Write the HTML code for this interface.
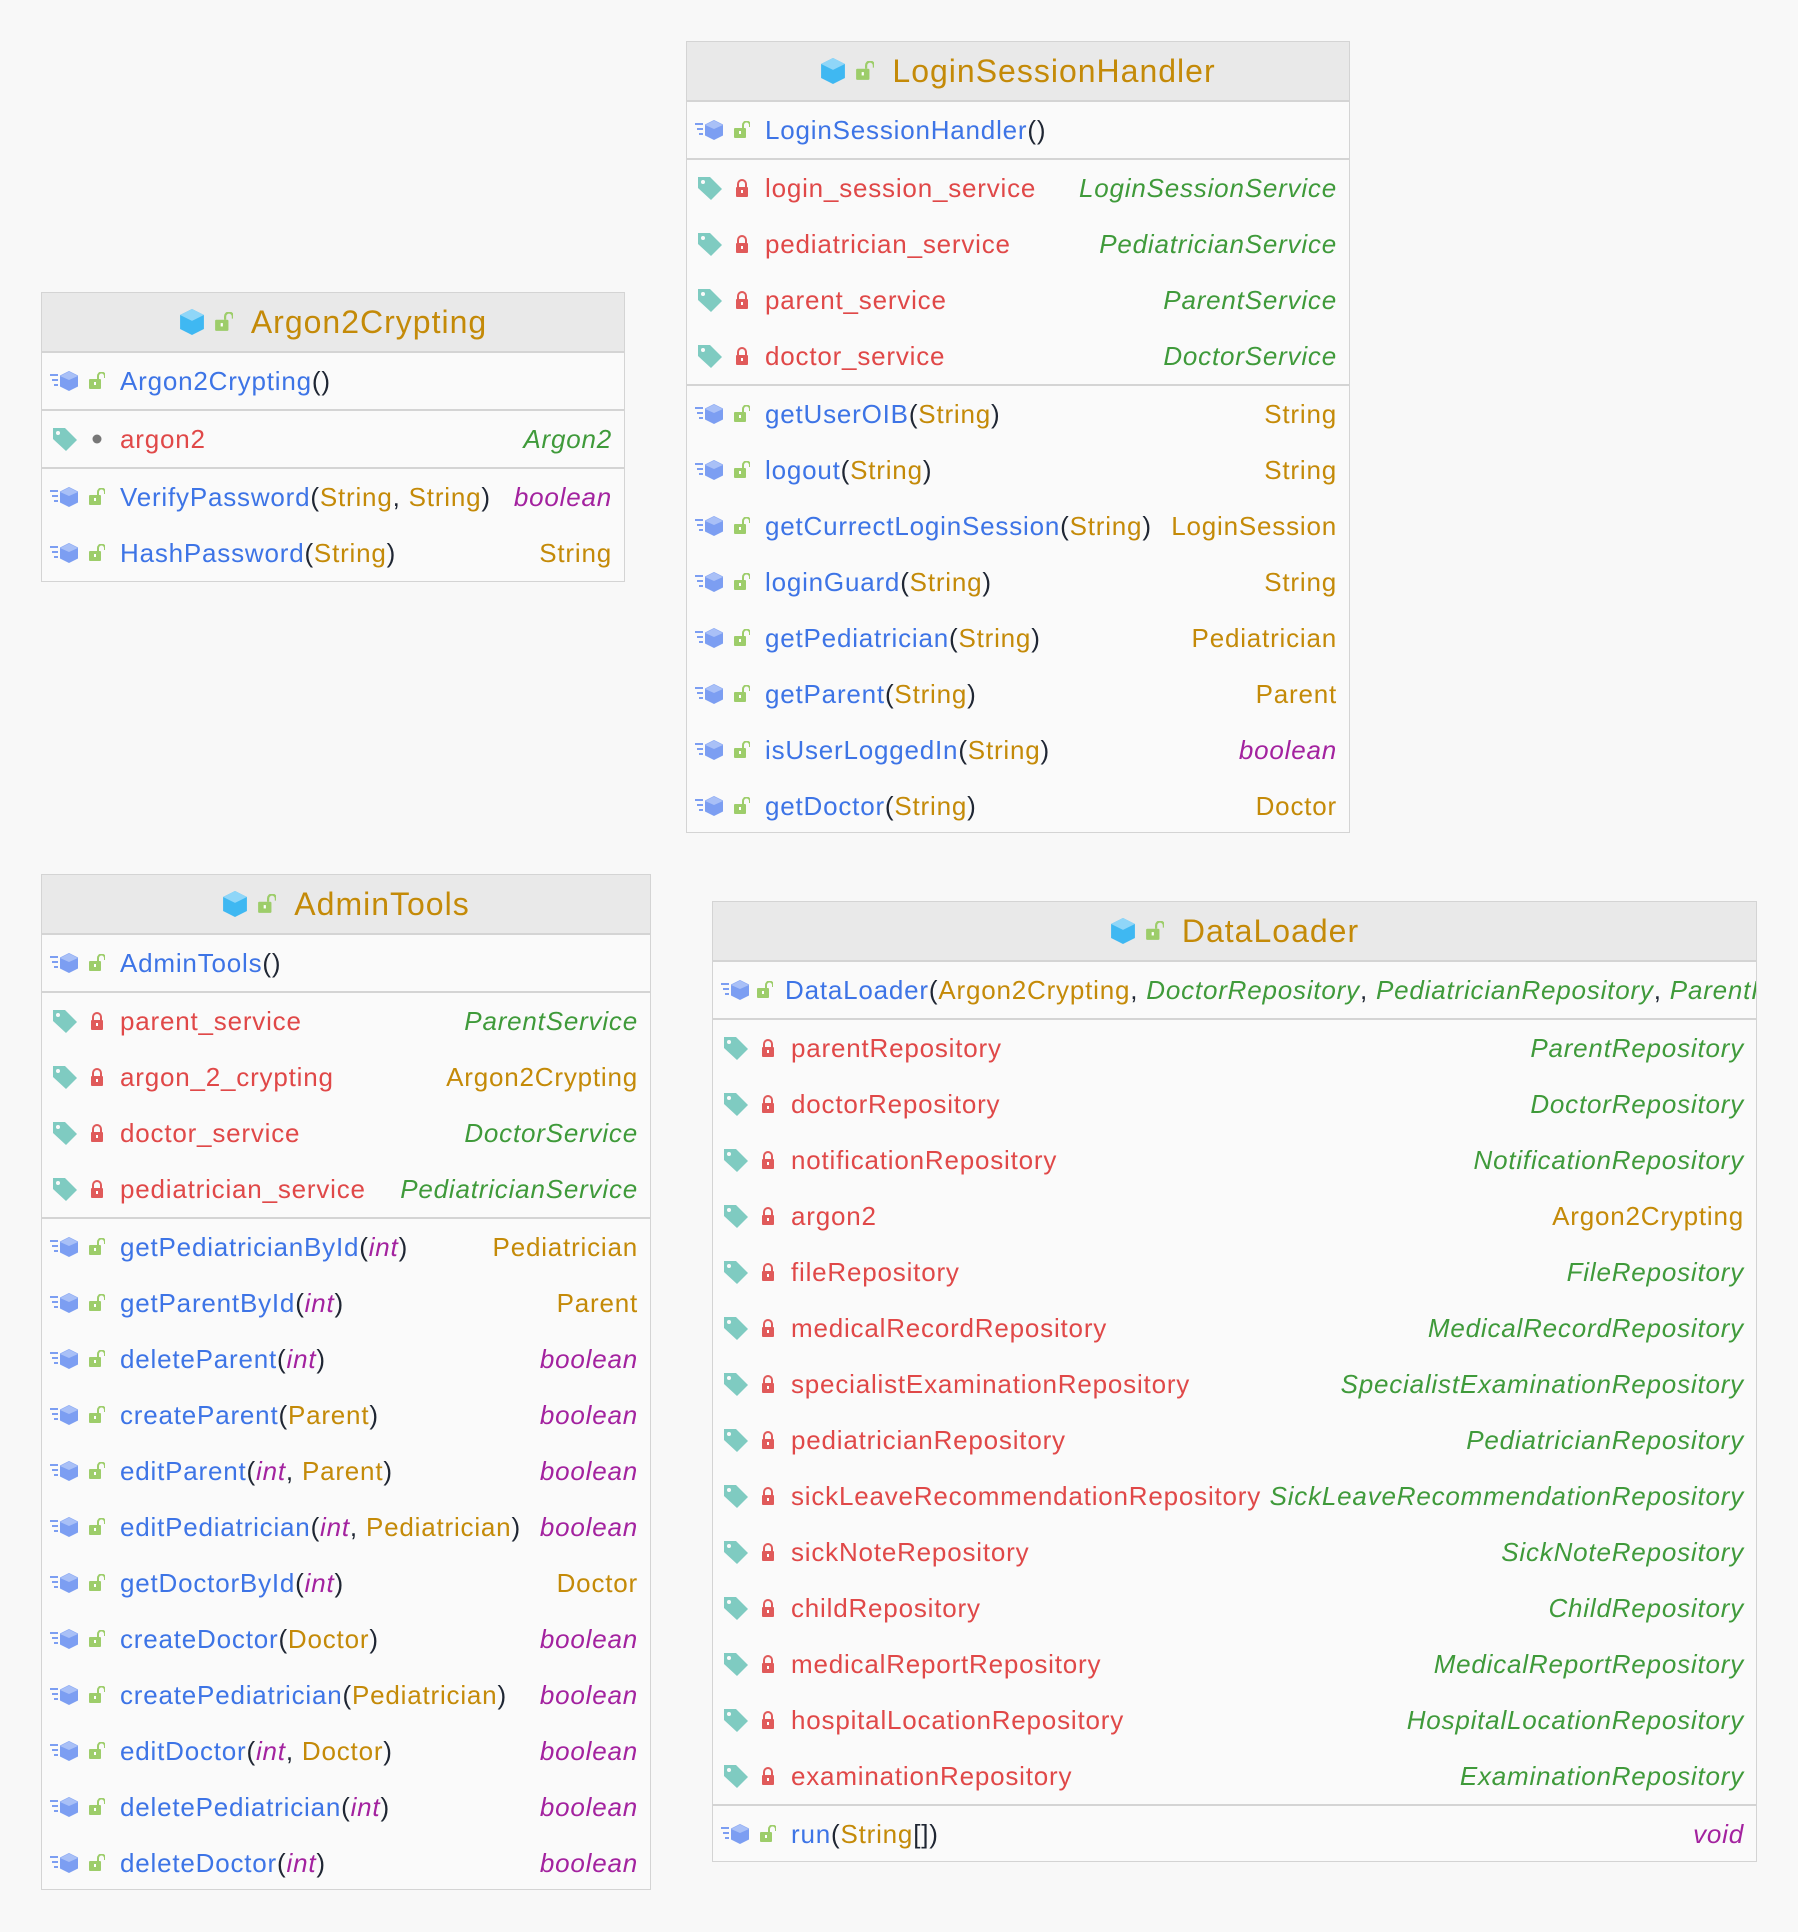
<!DOCTYPE html>
<html><head><meta charset="utf-8">
<style>
body{margin:0;width:1798px;height:1932px;background:#f8f8f8;font-family:"Liberation Sans",sans-serif;position:relative;overflow:hidden}
.box{position:absolute;background:#fafafa;border:1px solid #d4d4d4;box-sizing:border-box;overflow:hidden}
.hd{height:58px;background:#e9e9e9;border-bottom:2px solid #d4d4d4;display:flex;align-items:center;justify-content:center;font-size:32px;color:#c48a08;letter-spacing:1px}
.hd svg{margin-right:10px}
.hd .t{margin-left:8px}
.sec{border-bottom:2px solid #d4d4d4}
.sec:last-child{border-bottom:none}
.r{height:56px;display:flex;align-items:center;font-size:26px;white-space:pre;padding-right:12px;letter-spacing:0.8px}
.i1{width:30px;margin-left:8px;display:flex;justify-content:center}
.i2{width:22px;margin-left:6px;margin-right:12px;display:flex;justify-content:center}
.m{color:#3d74e6}.f{color:#e04848}.p{color:#1f2633}.o{color:#c48a08}.g{color:#3f9a3a;font-style:italic}.v{color:#a3229f;font-style:italic}
.ty{margin-left:auto}
</style></head><body>
<svg width="0" height="0" style="position:absolute">
<defs>
<symbol id="mt" viewBox="0 0 30 22"><g fill="#7c9ef2"><rect x="0" y="4" width="8" height="2"/><rect x="2" y="9" width="6" height="2"/><rect x="4" y="14" width="4" height="2"/><path d="M19 1 L28 5.5 V16.5 L19 21 L10 16.5 V5.5Z"/></g><path d="M10 6 L19 10 L28 6 L19 1.5Z" fill="#a9c0f7"/></symbol>
<symbol id="ol" viewBox="0 0 16 18"><path d="M9 7 V4 a3.5 3.5 0 0 1 7 0 V6" fill="none" stroke="#9dcd6a" stroke-width="2"/><rect x="0" y="7" width="12" height="10" rx="1" fill="#9dcd6a"/><rect x="5" y="10" width="2" height="3" fill="#fff"/></symbol>
<symbol id="cl" viewBox="0 0 14 18"><path d="M3 8 V5 a4 4 0 0 1 8 0 V8" fill="none" stroke="#e05a5a" stroke-width="2"/><rect x="1" y="8" width="12" height="10" rx="1" fill="#e05a5a"/><rect x="6" y="11" width="2" height="3" fill="#fff"/></symbol>
<symbol id="tg" viewBox="0 0 28 26"><path d="M2 2 H14 L26 14 L15 25 L2 13Z" fill="#7fcbc1"/><circle cx="7" cy="7" r="2" fill="#fafafa"/></symbol>
<symbol id="hx" viewBox="0 0 24 26"><path d="M12 1 L23 6.5 V19.5 L12 25 L1 19.5 V6.5Z" fill="#3fb8f2"/><path d="M1 6.5 L12 12 L23 6.5 L12 1Z" fill="#8fd6f8"/></symbol>
</defs></svg>

<!-- LoginSessionHandler -->
<div class="box" style="left:686px;top:41px;width:664px;height:792px">
<div class="hd"><svg width="26" height="30"><use href="#hx"/></svg><svg width="18" height="20"><use href="#ol"/></svg><span class="t">LoginSessionHandler</span></div>
<div class="sec"><div class="r"><span class="i1"><svg width="30" height="22"><use href="#mt"/></svg></span><span class="i2"><svg width="16" height="18"><use href="#ol"/></svg></span><span class="m">LoginSessionHandler</span><span class="p">()</span></div></div>
<div class="sec">
<div class="r"><span class="i1"><svg width="28" height="26"><use href="#tg"/></svg></span><span class="i2"><svg width="14" height="18"><use href="#cl"/></svg></span><span class="f">login_session_service</span><span class="ty g">LoginSessionService</span></div>
<div class="r"><span class="i1"><svg width="28" height="26"><use href="#tg"/></svg></span><span class="i2"><svg width="14" height="18"><use href="#cl"/></svg></span><span class="f">pediatrician_service</span><span class="ty g">PediatricianService</span></div>
<div class="r"><span class="i1"><svg width="28" height="26"><use href="#tg"/></svg></span><span class="i2"><svg width="14" height="18"><use href="#cl"/></svg></span><span class="f">parent_service</span><span class="ty g">ParentService</span></div>
<div class="r"><span class="i1"><svg width="28" height="26"><use href="#tg"/></svg></span><span class="i2"><svg width="14" height="18"><use href="#cl"/></svg></span><span class="f">doctor_service</span><span class="ty g">DoctorService</span></div>
</div>
<div class="sec">
<div class="r"><span class="i1"><svg width="30" height="22"><use href="#mt"/></svg></span><span class="i2"><svg width="16" height="18"><use href="#ol"/></svg></span><span class="m">getUserOIB</span><span class="p">(</span><span class="o">String</span><span class="p">)</span><span class="ty o">String</span></div>
<div class="r"><span class="i1"><svg width="30" height="22"><use href="#mt"/></svg></span><span class="i2"><svg width="16" height="18"><use href="#ol"/></svg></span><span class="m">logout</span><span class="p">(</span><span class="o">String</span><span class="p">)</span><span class="ty o">String</span></div>
<div class="r"><span class="i1"><svg width="30" height="22"><use href="#mt"/></svg></span><span class="i2"><svg width="16" height="18"><use href="#ol"/></svg></span><span class="m">getCurrectLoginSession</span><span class="p">(</span><span class="o">String</span><span class="p">)</span><span class="ty o">LoginSession</span></div>
<div class="r"><span class="i1"><svg width="30" height="22"><use href="#mt"/></svg></span><span class="i2"><svg width="16" height="18"><use href="#ol"/></svg></span><span class="m">loginGuard</span><span class="p">(</span><span class="o">String</span><span class="p">)</span><span class="ty o">String</span></div>
<div class="r"><span class="i1"><svg width="30" height="22"><use href="#mt"/></svg></span><span class="i2"><svg width="16" height="18"><use href="#ol"/></svg></span><span class="m">getPediatrician</span><span class="p">(</span><span class="o">String</span><span class="p">)</span><span class="ty o">Pediatrician</span></div>
<div class="r"><span class="i1"><svg width="30" height="22"><use href="#mt"/></svg></span><span class="i2"><svg width="16" height="18"><use href="#ol"/></svg></span><span class="m">getParent</span><span class="p">(</span><span class="o">String</span><span class="p">)</span><span class="ty o">Parent</span></div>
<div class="r"><span class="i1"><svg width="30" height="22"><use href="#mt"/></svg></span><span class="i2"><svg width="16" height="18"><use href="#ol"/></svg></span><span class="m">isUserLoggedIn</span><span class="p">(</span><span class="o">String</span><span class="p">)</span><span class="ty v">boolean</span></div>
<div class="r"><span class="i1"><svg width="30" height="22"><use href="#mt"/></svg></span><span class="i2"><svg width="16" height="18"><use href="#ol"/></svg></span><span class="m">getDoctor</span><span class="p">(</span><span class="o">String</span><span class="p">)</span><span class="ty o">Doctor</span></div>
</div></div>

<!-- Argon2Crypting -->
<div class="box" style="left:41px;top:292px;width:584px;height:290px">
<div class="hd"><svg width="26" height="30"><use href="#hx"/></svg><svg width="18" height="20"><use href="#ol"/></svg><span class="t">Argon2Crypting</span></div>
<div class="sec"><div class="r"><span class="i1"><svg width="30" height="22"><use href="#mt"/></svg></span><span class="i2"><svg width="16" height="18"><use href="#ol"/></svg></span><span class="m">Argon2Crypting</span><span class="p">()</span></div></div>
<div class="sec"><div class="r"><span class="i1"><svg width="28" height="26"><use href="#tg"/></svg></span><span class="i2"><svg width="10" height="10"><circle cx="5" cy="5" r="4.5" fill="#777"/></svg></span><span class="f">argon2</span><span class="ty g">Argon2</span></div></div>
<div class="sec">
<div class="r"><span class="i1"><svg width="30" height="22"><use href="#mt"/></svg></span><span class="i2"><svg width="16" height="18"><use href="#ol"/></svg></span><span class="m">VerifyPassword</span><span class="p">(</span><span class="o">String</span><span class="p">,&nbsp;</span><span class="o">String</span><span class="p">)</span><span class="ty v">boolean</span></div>
<div class="r"><span class="i1"><svg width="30" height="22"><use href="#mt"/></svg></span><span class="i2"><svg width="16" height="18"><use href="#ol"/></svg></span><span class="m">HashPassword</span><span class="p">(</span><span class="o">String</span><span class="p">)</span><span class="ty o">String</span></div>
</div></div>

<!-- AdminTools -->
<div class="box" style="left:41px;top:874px;width:610px;height:1016px">
<div class="hd"><svg width="26" height="30"><use href="#hx"/></svg><svg width="18" height="20"><use href="#ol"/></svg><span class="t">AdminTools</span></div>
<div class="sec"><div class="r"><span class="i1"><svg width="30" height="22"><use href="#mt"/></svg></span><span class="i2"><svg width="16" height="18"><use href="#ol"/></svg></span><span class="m">AdminTools</span><span class="p">()</span></div></div>
<div class="sec">
<div class="r"><span class="i1"><svg width="28" height="26"><use href="#tg"/></svg></span><span class="i2"><svg width="14" height="18"><use href="#cl"/></svg></span><span class="f">parent_service</span><span class="ty g">ParentService</span></div>
<div class="r"><span class="i1"><svg width="28" height="26"><use href="#tg"/></svg></span><span class="i2"><svg width="14" height="18"><use href="#cl"/></svg></span><span class="f">argon_2_crypting</span><span class="ty o">Argon2Crypting</span></div>
<div class="r"><span class="i1"><svg width="28" height="26"><use href="#tg"/></svg></span><span class="i2"><svg width="14" height="18"><use href="#cl"/></svg></span><span class="f">doctor_service</span><span class="ty g">DoctorService</span></div>
<div class="r"><span class="i1"><svg width="28" height="26"><use href="#tg"/></svg></span><span class="i2"><svg width="14" height="18"><use href="#cl"/></svg></span><span class="f">pediatrician_service</span><span class="ty g">PediatricianService</span></div>
</div>
<div class="sec">
<div class="r"><span class="i1"><svg width="30" height="22"><use href="#mt"/></svg></span><span class="i2"><svg width="16" height="18"><use href="#ol"/></svg></span><span class="m">getPediatricianById</span><span class="p">(</span><span class="v">int</span><span class="p">)</span><span class="ty o">Pediatrician</span></div>
<div class="r"><span class="i1"><svg width="30" height="22"><use href="#mt"/></svg></span><span class="i2"><svg width="16" height="18"><use href="#ol"/></svg></span><span class="m">getParentById</span><span class="p">(</span><span class="v">int</span><span class="p">)</span><span class="ty o">Parent</span></div>
<div class="r"><span class="i1"><svg width="30" height="22"><use href="#mt"/></svg></span><span class="i2"><svg width="16" height="18"><use href="#ol"/></svg></span><span class="m">deleteParent</span><span class="p">(</span><span class="v">int</span><span class="p">)</span><span class="ty v">boolean</span></div>
<div class="r"><span class="i1"><svg width="30" height="22"><use href="#mt"/></svg></span><span class="i2"><svg width="16" height="18"><use href="#ol"/></svg></span><span class="m">createParent</span><span class="p">(</span><span class="o">Parent</span><span class="p">)</span><span class="ty v">boolean</span></div>
<div class="r"><span class="i1"><svg width="30" height="22"><use href="#mt"/></svg></span><span class="i2"><svg width="16" height="18"><use href="#ol"/></svg></span><span class="m">editParent</span><span class="p">(</span><span class="v">int</span><span class="p">,&nbsp;</span><span class="o">Parent</span><span class="p">)</span><span class="ty v">boolean</span></div>
<div class="r"><span class="i1"><svg width="30" height="22"><use href="#mt"/></svg></span><span class="i2"><svg width="16" height="18"><use href="#ol"/></svg></span><span class="m">editPediatrician</span><span class="p">(</span><span class="v">int</span><span class="p">,&nbsp;</span><span class="o">Pediatrician</span><span class="p">)</span><span class="ty v">boolean</span></div>
<div class="r"><span class="i1"><svg width="30" height="22"><use href="#mt"/></svg></span><span class="i2"><svg width="16" height="18"><use href="#ol"/></svg></span><span class="m">getDoctorById</span><span class="p">(</span><span class="v">int</span><span class="p">)</span><span class="ty o">Doctor</span></div>
<div class="r"><span class="i1"><svg width="30" height="22"><use href="#mt"/></svg></span><span class="i2"><svg width="16" height="18"><use href="#ol"/></svg></span><span class="m">createDoctor</span><span class="p">(</span><span class="o">Doctor</span><span class="p">)</span><span class="ty v">boolean</span></div>
<div class="r"><span class="i1"><svg width="30" height="22"><use href="#mt"/></svg></span><span class="i2"><svg width="16" height="18"><use href="#ol"/></svg></span><span class="m">createPediatrician</span><span class="p">(</span><span class="o">Pediatrician</span><span class="p">)</span><span class="ty v">boolean</span></div>
<div class="r"><span class="i1"><svg width="30" height="22"><use href="#mt"/></svg></span><span class="i2"><svg width="16" height="18"><use href="#ol"/></svg></span><span class="m">editDoctor</span><span class="p">(</span><span class="v">int</span><span class="p">,&nbsp;</span><span class="o">Doctor</span><span class="p">)</span><span class="ty v">boolean</span></div>
<div class="r"><span class="i1"><svg width="30" height="22"><use href="#mt"/></svg></span><span class="i2"><svg width="16" height="18"><use href="#ol"/></svg></span><span class="m">deletePediatrician</span><span class="p">(</span><span class="v">int</span><span class="p">)</span><span class="ty v">boolean</span></div>
<div class="r"><span class="i1"><svg width="30" height="22"><use href="#mt"/></svg></span><span class="i2"><svg width="16" height="18"><use href="#ol"/></svg></span><span class="m">deleteDoctor</span><span class="p">(</span><span class="v">int</span><span class="p">)</span><span class="ty v">boolean</span></div>
</div></div>

<!-- DataLoader -->
<div class="box" style="left:712px;top:901px;width:1045px;height:961px">
<div class="hd"><svg width="26" height="30"><use href="#hx"/></svg><svg width="18" height="20"><use href="#ol"/></svg><span class="t">DataLoader</span></div>
<div class="sec"><div class="r"><span class="i1"><svg width="30" height="22"><use href="#mt"/></svg></span><span class="i2"><svg width="16" height="18"><use href="#ol"/></svg></span><span class="m">DataLoader</span><span class="p">(</span><span class="o">Argon2Crypting</span><span class="p">,&nbsp;</span><span class="g">DoctorRepository</span><span class="p">,&nbsp;</span><span class="g">PediatricianRepository</span><span class="p">,&nbsp;</span><span class="g">ParentRepository</span></div></div>
<div class="sec">
<div class="r"><span class="i1"><svg width="28" height="26"><use href="#tg"/></svg></span><span class="i2"><svg width="14" height="18"><use href="#cl"/></svg></span><span class="f">parentRepository</span><span class="ty g">ParentRepository</span></div>
<div class="r"><span class="i1"><svg width="28" height="26"><use href="#tg"/></svg></span><span class="i2"><svg width="14" height="18"><use href="#cl"/></svg></span><span class="f">doctorRepository</span><span class="ty g">DoctorRepository</span></div>
<div class="r"><span class="i1"><svg width="28" height="26"><use href="#tg"/></svg></span><span class="i2"><svg width="14" height="18"><use href="#cl"/></svg></span><span class="f">notificationRepository</span><span class="ty g">NotificationRepository</span></div>
<div class="r"><span class="i1"><svg width="28" height="26"><use href="#tg"/></svg></span><span class="i2"><svg width="14" height="18"><use href="#cl"/></svg></span><span class="f">argon2</span><span class="ty o">Argon2Crypting</span></div>
<div class="r"><span class="i1"><svg width="28" height="26"><use href="#tg"/></svg></span><span class="i2"><svg width="14" height="18"><use href="#cl"/></svg></span><span class="f">fileRepository</span><span class="ty g">FileRepository</span></div>
<div class="r"><span class="i1"><svg width="28" height="26"><use href="#tg"/></svg></span><span class="i2"><svg width="14" height="18"><use href="#cl"/></svg></span><span class="f">medicalRecordRepository</span><span class="ty g">MedicalRecordRepository</span></div>
<div class="r"><span class="i1"><svg width="28" height="26"><use href="#tg"/></svg></span><span class="i2"><svg width="14" height="18"><use href="#cl"/></svg></span><span class="f">specialistExaminationRepository</span><span class="ty g">SpecialistExaminationRepository</span></div>
<div class="r"><span class="i1"><svg width="28" height="26"><use href="#tg"/></svg></span><span class="i2"><svg width="14" height="18"><use href="#cl"/></svg></span><span class="f">pediatricianRepository</span><span class="ty g">PediatricianRepository</span></div>
<div class="r"><span class="i1"><svg width="28" height="26"><use href="#tg"/></svg></span><span class="i2"><svg width="14" height="18"><use href="#cl"/></svg></span><span class="f">sickLeaveRecommendationRepository</span><span class="ty g">SickLeaveRecommendationRepository</span></div>
<div class="r"><span class="i1"><svg width="28" height="26"><use href="#tg"/></svg></span><span class="i2"><svg width="14" height="18"><use href="#cl"/></svg></span><span class="f">sickNoteRepository</span><span class="ty g">SickNoteRepository</span></div>
<div class="r"><span class="i1"><svg width="28" height="26"><use href="#tg"/></svg></span><span class="i2"><svg width="14" height="18"><use href="#cl"/></svg></span><span class="f">childRepository</span><span class="ty g">ChildRepository</span></div>
<div class="r"><span class="i1"><svg width="28" height="26"><use href="#tg"/></svg></span><span class="i2"><svg width="14" height="18"><use href="#cl"/></svg></span><span class="f">medicalReportRepository</span><span class="ty g">MedicalReportRepository</span></div>
<div class="r"><span class="i1"><svg width="28" height="26"><use href="#tg"/></svg></span><span class="i2"><svg width="14" height="18"><use href="#cl"/></svg></span><span class="f">hospitalLocationRepository</span><span class="ty g">HospitalLocationRepository</span></div>
<div class="r"><span class="i1"><svg width="28" height="26"><use href="#tg"/></svg></span><span class="i2"><svg width="14" height="18"><use href="#cl"/></svg></span><span class="f">examinationRepository</span><span class="ty g">ExaminationRepository</span></div>
</div>
<div class="sec"><div class="r"><span class="i1"><svg width="30" height="22"><use href="#mt"/></svg></span><span class="i2"><svg width="16" height="18"><use href="#ol"/></svg></span><span class="m">run</span><span class="p">(</span><span class="o">String</span><span class="p">[])</span><span class="ty v">void</span></div></div>
</div>
</body></html>
